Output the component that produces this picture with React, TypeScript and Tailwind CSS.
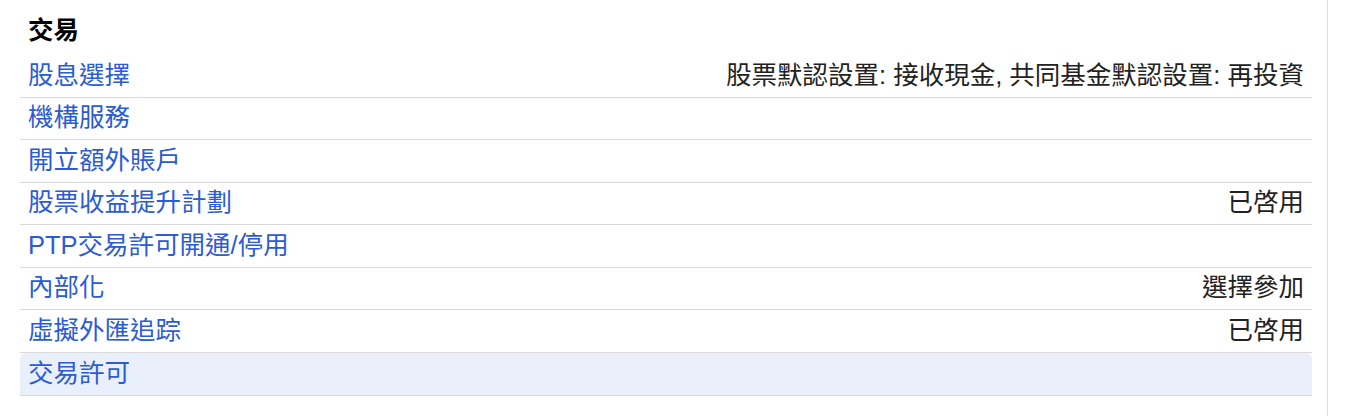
const rows: { label: string; value?: string; active?: boolean }[] = [
  { label: "股息選擇", value: "股票默認設置: 接收現金, 共同基金默認設置: 再投資" },
  { label: "機構服務" },
  { label: "開立額外賬戶" },
  { label: "股票收益提升計劃", value: "已啓用" },
  { label: "PTP交易許可開通/停用" },
  { label: "內部化", value: "選擇參加" },
  { label: "虛擬外匯追踪", value: "已啓用" },
  { label: "交易許可", active: true },
]

export default function App() {
  return (
    <div
      className="flex h-[416px] w-full bg-white text-[#222]"
      style={{ fontFamily: '"Liberation Sans", "Noto Sans CJK TC", sans-serif' }}
    >
      <div className="w-[1328px] shrink-0 border-r border-[#dcdcdc] pl-5 pr-[15px] pt-[13px]">
        <h2 className="mb-[8px] h-[34px] px-2 text-[25.5px] font-bold leading-[34px] text-black">交易</h2>
        <ul>
          {rows.map((r) => (
            <li
              key={r.label}
              className={
                "flex h-[42.57px] items-center justify-between border-b border-[#d9d9d9] pl-2 pr-[8px] pb-[2px] text-[25.5px] " +
                (r.active ? "rounded-t-md bg-[#e9f0fc]" : "")
              }
            >
              <a href="#" className="text-[#2b5cd3]">
                {r.label}
              </a>
              {r.value && <span className="text-[#222]">{r.value}</span>}
            </li>
          ))}
        </ul>
      </div>
      <div className="flex-1" />
    </div>
  )
}
